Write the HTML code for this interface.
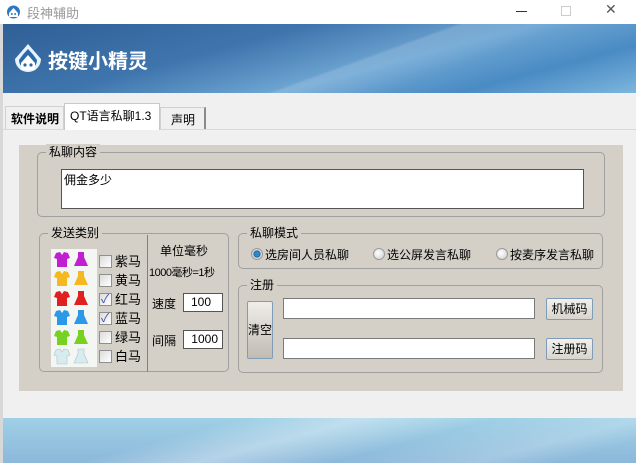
<!DOCTYPE html>
<html><head><meta charset="utf-8">
<style>
*{margin:0;padding:0;box-sizing:border-box}
body{width:636px;height:463px;overflow:hidden;background:#f0f0f0;font-family:"Liberation Sans","Noto Sans CJK SC",sans-serif;font-size:12px;color:#000;position:relative}
.a{position:absolute}
.grp{position:absolute;border:1px solid #a0a0a0;border-radius:5px}
.lg{position:absolute;top:-9px;left:8px;background:#d4d0c8;padding:0 3px;font-size:12px;line-height:16px}
.inp{position:absolute;background:#fff;border:1px solid #7a7a7a}
.btn{position:absolute;border:1px solid #7f9db9;border-radius:2px;background:linear-gradient(#f2f1ee,#d8d5cd);text-align:center;font-size:12px}
.cb{position:absolute;width:13px;height:13px;border:1px solid #8e8f8f;background:linear-gradient(135deg,#dcdcdc,#fff)}
.rd{position:absolute;width:12px;height:12px;border-radius:50%;border:1px solid #9a9a9a;background:radial-gradient(circle at 40% 40%,#fff,#ccc)}
.cl{position:absolute;left:115px;font-size:13px;line-height:16px}
</style></head><body>
<div class="a" style="left:0;top:0;width:636px;height:24px;background:#fff"></div>
<svg class="a" style="left:6px;top:4px" width="15" height="15" viewBox="0 0 15 15"><circle cx="7.5" cy="8" r="6.5" fill="#2f78c0"/><path d="M3 9 L7.5 4 L12 9 V13 H3Z" fill="#fff"/><circle cx="5.8" cy="10" r="1" fill="#2f78c0"/><circle cx="9.2" cy="10" r="1" fill="#2f78c0"/></svg>
<div class="a" style="left:27px;top:3px;color:#999;font-size:13px">段神辅助</div>
<div class="a" style="left:516px;top:11px;width:11px;height:1px;background:#333"></div>
<div class="a" style="left:561px;top:6px;width:10px;height:10px;border:1px solid #ccc"></div>
<div class="a" style="left:605px;top:1px;font-size:14px;color:#555">✕</div>
<div class="a" style="left:3px;top:24px;width:633px;height:69px;background:linear-gradient(165deg,#2f5f95 0%,#3f75ad 35%,#6fa7d4 60%,#4a8bc4 80%,#7db6de 100%)"></div>
<div class="a" style="left:3px;top:24px;width:633px;height:69px;background:linear-gradient(160deg,transparent 55%,rgba(255,255,255,.15) 56%,transparent 70%)"></div>
<svg class="a" style="left:12px;top:42px" width="32" height="32" viewBox="0 0 32 32"><path d="M16 2 Q22 9 29 17 A13 13 0 1 1 3 17 Q10 9 16 2Z" fill="#e8f2fa"/><path d="M16 7 Q21 12 25 18 A9 9 0 1 1 7 18 Q11 12 16 7Z" fill="#2b6aa8"/><path d="M9 21 L16 13 L23 21 V28 H9Z" fill="#fff"/><circle cx="13" cy="23" r="1.6" fill="#2b6aa8"/><circle cx="19" cy="23" r="1.6" fill="#2b6aa8"/></svg>
<div class="a" style="left:48px;top:45px;color:#fff;font-size:20px;font-weight:bold">按键小精灵</div>
<div class="a" style="left:0;top:24px;width:3px;height:439px;background:#d8d8d8"></div>
<div class="a" style="left:3px;top:129px;width:633px;height:1px;background:#d9d9d9"></div>
<div class="a" style="left:5px;top:106px;width:59px;height:23px;border:1px solid #d0d0d0;border-bottom:none;background:#f0f0f0"></div>
<div class="a" style="left:11px;top:110px;font-size:12px;font-weight:bold">软件说明</div>
<div class="a" style="left:64px;top:103px;width:96px;height:27px;border:1px solid #c8c8c8;border-bottom:none;background:#fff"></div>
<div class="a" style="left:70px;top:107px;font-size:12px">QT语言私聊1.3</div>
<div class="a" style="left:160px;top:107px;width:46px;height:22px;border:1px solid #d0d0d0;border-right:2px solid #8a8a8a;border-bottom:none;background:#f0f0f0"></div>
<div class="a" style="left:171px;top:111px;font-size:12px">声明</div>
<div class="a" style="left:19px;top:145px;width:604px;height:246px;background:#d4d0c8"></div>
<div class="grp" style="left:37px;top:152px;width:568px;height:65px"><div class="lg">私聊内容</div></div>
<div class="inp" style="left:61px;top:169px;width:523px;height:40px;border:1px solid #555"></div>
<div class="a" style="left:64px;top:171px">佣金多少</div>
<div class="grp" style="left:39px;top:233px;width:190px;height:139px"><div class="lg">发送类别</div></div>
<div class="a" style="left:147px;top:235px;width:1px;height:137px;background:#808080"></div>
<div class="a" style="left:51px;top:249px;width:46px;height:118px;background:#f4f6f4"></div>
<svg class="a" style="left:51px;top:250px" width="46" height="118" viewBox="0 0 46 118">
<defs>
<g id="sh"><path d="M3 1 L7 0 L9 3 L11 0 L15 1 L17 6 L14 7 V15 H4 V7 L1 6Z"/></g>
<g id="dr"><path d="M5 0 H11 V5 L15 14 H1 L5 5Z"/></g>
</defs>
<g fill="#c020d0"><use href="#sh" x="2" y="2"/><use href="#dr" x="22" y="2"/></g>
<g fill="#f5b820"><use href="#sh" x="2" y="21"/><use href="#dr" x="22" y="21"/></g>
<g fill="#e02020"><use href="#sh" x="2" y="41"/><use href="#dr" x="22" y="41"/></g>
<g fill="#2a9ae8"><use href="#sh" x="2" y="60"/><use href="#dr" x="22" y="60"/></g>
<g fill="#78d020"><use href="#sh" x="2" y="80"/><use href="#dr" x="22" y="80"/></g>
<g fill="#d8ecf0" stroke="#a8c4cc" stroke-width=".6"><use href="#sh" x="2" y="99"/><use href="#dr" x="22" y="99"/></g>
</svg>
<div class="cb" style="left:99px;top:255px"></div><div class="cl" style="top:254px">紫马</div>
<div class="cb" style="left:99px;top:274px"></div><div class="cl" style="top:273px">黄马</div>
<div class="cb" style="left:99px;top:293px"></div><div class="a" style="left:101px;top:290px;color:#3a4fa8;font-size:12px">✓</div><div class="cl" style="top:292px">红马</div>
<div class="cb" style="left:99px;top:312px"></div><div class="a" style="left:101px;top:309px;color:#3a4fa8;font-size:12px">✓</div><div class="cl" style="top:311px">蓝马</div>
<div class="cb" style="left:99px;top:331px"></div><div class="cl" style="top:330px">绿马</div>
<div class="cb" style="left:99px;top:350px"></div><div class="cl" style="top:349px">白马</div>
<div class="a" style="left:160px;top:242px;font-size:12px">单位毫秒</div>
<div class="a" style="left:149px;top:264px;font-size:11px;letter-spacing:-.5px">1000毫秒=1秒</div>
<div class="a" style="left:152px;top:295px;font-size:12px">速度</div>
<div class="inp" style="left:183px;top:293px;width:40px;height:19px;border-color:#555;text-align:right;padding-right:11px;line-height:17px">100</div>
<div class="a" style="left:152px;top:332px;font-size:12px">间隔</div>
<div class="inp" style="left:183px;top:330px;width:40px;height:19px;border-color:#555;text-align:right;padding-right:4px;line-height:17px">1000</div>
<div class="grp" style="left:238px;top:233px;width:365px;height:36px"><div class="lg">私聊模式</div></div>
<div class="rd" style="left:251px;top:248px;background:radial-gradient(circle,#2a8ad0 35%,#1a4f80 45%,#ddd 55%,#bbb)"></div><div class="a" style="left:265px;top:246px">选房间人员私聊</div>
<div class="rd" style="left:373px;top:248px"></div><div class="a" style="left:387px;top:246px">选公屏发言私聊</div>
<div class="rd" style="left:496px;top:248px"></div><div class="a" style="left:510px;top:246px">按麦序发言私聊</div>
<div class="grp" style="left:238px;top:285px;width:365px;height:88px"><div class="lg">注册</div></div>
<div class="btn" style="left:247px;top:301px;width:26px;height:58px;line-height:56px;background:linear-gradient(#f0eeea,#c0bbb3)">清空</div>
<div class="inp" style="left:283px;top:298px;width:252px;height:21px"></div>
<div class="inp" style="left:283px;top:338px;width:252px;height:21px"></div>
<div class="btn" style="left:546px;top:298px;width:47px;height:22px;line-height:20px">机械码</div>
<div class="btn" style="left:546px;top:338px;width:47px;height:22px;line-height:20px">注册码</div>
<div class="a" style="left:3px;top:418px;width:633px;height:45px;background:linear-gradient(#9fd0e6,#8cb8da)"></div>
<div class="a" style="left:3px;top:418px;width:633px;height:45px;background:linear-gradient(165deg,transparent 30%,rgba(255,255,255,.35) 45%,transparent 62%,rgba(255,255,255,.2) 80%,transparent 90%)"></div>
</body></html>
